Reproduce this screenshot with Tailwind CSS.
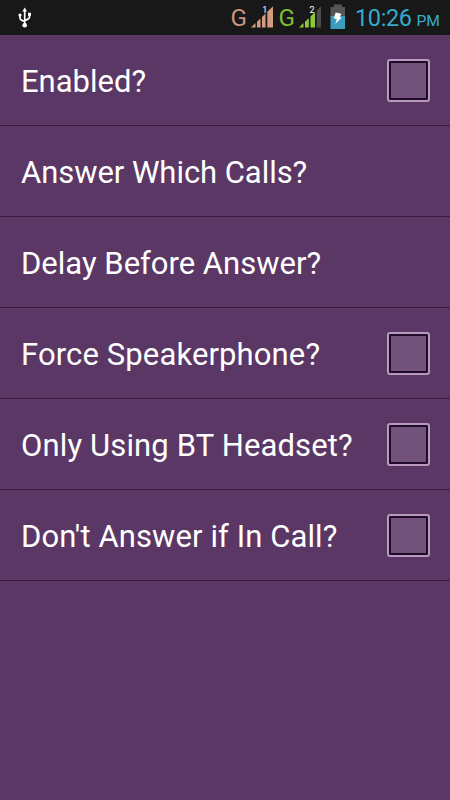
<!DOCTYPE html>
<html lang="en">
<head>
<meta charset="utf-8">
<title>Auto answer settings</title>
<script src="https://cdn.jsdelivr.net/npm/@tailwindcss/browser@4"></script>
</head>
<body class="w-[450px] h-[800px] overflow-hidden bg-[#5b3765] font-[Roboto,sans-serif]">
<header class="h-[35px] bg-[#181818] flex items-start">
  <svg class="w-[450px] h-[35px]" viewBox="0 0 450 35">
    <g fill="none" stroke="#fff" stroke-width="1.7">
      <path d="M24.7 10V25M20 15.5V18Q20 20 24.7 21.5M29.5 14.5V17Q29.5 19 24.7 20.5"/>
    </g>
    <g fill="#fff"><path d="M24.7 7.5L27 11.5H22.4Z"/><circle cx="24.7" cy="25.2" r="2.3"/><circle cx="20" cy="15" r="1.6"/><path d="M28 12.8h3v3h-3z"/></g>
    <text x="230.5" y="26" font-size="24.5" textLength="16.5" lengthAdjust="spacingAndGlyphs" fill="#c99480">G</text>
    <path fill="#d59a80" d="M251 27.5L255.5 23V27.5ZM257 21.8L260.5 18.5V27.5H257ZM262 17L265.5 13.5V27.5H262ZM267.3 11.7L273 6.2V27.5H267.3Z"/>
    <text x="262.2" y="13.3" font-size="9" fill="#fff">1</text>
    <text x="278.5" y="26" font-size="24.5" textLength="16.5" lengthAdjust="spacingAndGlyphs" fill="#7fbd32">G</text>
    <path fill="#8cc83c" d="M299 27.5L303.5 23V27.5ZM305 21.8L308.8 18.3V27.5H305ZM310.5 16.6L315 12.3V27.5H310.5Z"/>
    <path fill="#4c4c4c" d="M316.7 10.7L321 6.2V27.5H316.7Z"/>
    <text x="309.5" y="13.3" font-size="9" fill="#fff">2</text>
    <path fill="#555" d="M334 4.5H342V7H345V16H330.5V7H334Z"/><path fill="#3b9dbd" d="M330.5 16H345V29H330.5Z"/>
    <path fill="#fff" d="M335.7 12.5L341.5 13.8L339.8 17L341.6 17.8L335.3 24L336.8 19.3L333.8 18.2Z"/>
    <text x="355" y="26" font-size="23.5" textLength="57" lengthAdjust="spacing" fill="#35abd0">10:26</text>
    <text x="416.5" y="26" font-size="15.5" textLength="23.5" lengthAdjust="spacingAndGlyphs" fill="#35abd0">PM</text>
  </svg>
</header>
<main class="text-white text-[31px] leading-[36px] whitespace-nowrap">
  <div class="h-[91px] border-b border-[#351d3d] pl-[21px] pr-[20px] flex items-center justify-between"><span class="pt-1">Enabled?</span><i class="w-[43px] h-[43px] rounded-[3px] border-2 border-[#b69abd] bg-[#210b2a] p-[2px]"><b class="block size-full bg-[#70527a]"></b></i></div>
  <div class="h-[91px] border-b border-[#351d3d] pl-[21px] flex items-center"><span class="pt-1 tracking-[-0.05px]">Answer Which Calls?</span></div>
  <div class="h-[91px] border-b border-[#351d3d] pl-[21px] flex items-center"><span class="pt-1">Delay Before Answer?</span></div>
  <div class="h-[91px] border-b border-[#351d3d] pl-[21px] pr-[20px] flex items-center justify-between"><span class="pt-1 tracking-[0.12px]">Force Speakerphone?</span><i class="w-[43px] h-[43px] rounded-[3px] border-2 border-[#b69abd] bg-[#210b2a] p-[2px]"><b class="block size-full bg-[#70527a]"></b></i></div>
  <div class="h-[91px] border-b border-[#351d3d] pl-[21px] pr-[20px] flex items-center justify-between"><span class="pt-1 tracking-[0.14px]">Only Using BT Headset?</span><i class="w-[43px] h-[43px] rounded-[3px] border-2 border-[#b69abd] bg-[#210b2a] p-[2px]"><b class="block size-full bg-[#70527a]"></b></i></div>
  <div class="h-[91px] border-b border-[#351d3d] pl-[21px] pr-[20px] flex items-center justify-between"><span class="pt-1 tracking-[0.1px]">Don't Answer if In Call?</span><i class="w-[43px] h-[43px] rounded-[3px] border-2 border-[#b69abd] bg-[#210b2a] p-[2px]"><b class="block size-full bg-[#70527a]"></b></i></div>
</main>
</body>
</html>
